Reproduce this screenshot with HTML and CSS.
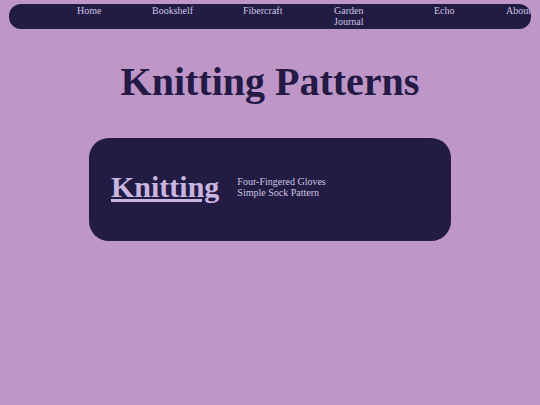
FILE: index.html
```html
<!DOCTYPE html>
<html lang="en">
<head>
<meta charset="utf-8">
<title>Knitting Patterns</title>
<link rel="stylesheet" href="styles.css">
</head>
<body>
<nav class="topnav">
  <ul class="nav-list">
    <li class="nav-item"><a href="#">Home</a></li>
    <li class="nav-item"><a href="#">Bookshelf</a></li>
    <li class="nav-item"><a href="#">Fibercraft</a></li>
    <li class="nav-item nav-narrow"><a href="#">Garden Journal</a></li>
    <li class="nav-item"><a href="#">Echo</a></li>
    <li class="nav-item"><a href="#">About</a></li>
  </ul>
</nav>
<h1 class="title">Knitting Patterns</h1>
<section class="card">
  <a class="card-title" href="#">Knitting</a>
  <ul class="card-links">
    <li><a href="#">Four-Fingered Gloves</a></li>
    <li><a href="#">Simple Sock Pattern</a></li>
  </ul>
</section>
</body>
</html>
```

FILE: styles.css
```css
html, body {
  margin: 0;
  padding: 0;
}
body {
  background: #bf96c8;
  font-family: "Liberation Serif", "Times New Roman", serif;
  color: #221b44;
}
a {
  color: inherit;
  text-decoration: none;
}
.topnav {
  margin: 4px 9px 0 9px;
  height: 25px;
  box-sizing: border-box;
  background: #221b44;
  border-radius: 12px;
  overflow: hidden;
  padding: 1px 0 1px 68px;
}
.nav-list {
  list-style: none;
  margin: 0;
  padding: 0;
  display: grid;
  grid-template-columns: 75px 91px 91px 100px 72px 60px;
  font-size: 10px;
  color: #cdc4e0;
  white-space: nowrap;
}
.nav-narrow {
  white-space: normal;
  max-width: 40px;
}
.title {
  margin: 29px 0 0 0;
  text-align: center;
  font-size: 40px;
  font-weight: bold;
  color: #231a45;
}
.card {
  width: 362px;
  height: 103px;
  box-sizing: border-box;
  margin: 33px auto 0 auto;
  background: #221b44;
  border-radius: 20px;
  display: flex;
  align-items: center;
  gap: 18px;
  padding: 0 22px 6px 22px;
}
.card-title {
  font-size: 30px;
  font-weight: bold;
  color: #c9b5e0;
  text-decoration: underline;
}
.card-links {
  list-style: none;
  margin: 0;
  padding: 0;
  font-size: 10px;
  color: #cdc4e0;
}
```
